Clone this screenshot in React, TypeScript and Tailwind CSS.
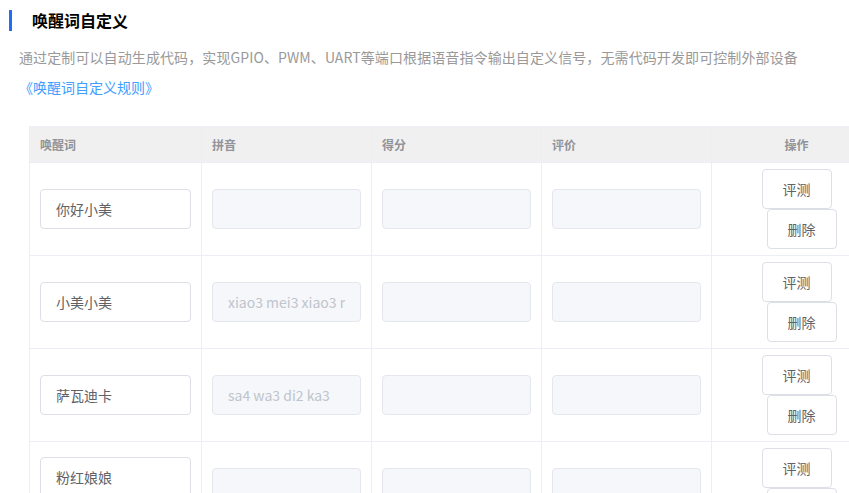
import React from "react";

const FONT = { fontFamily: '"Microsoft YaHei", "Noto Sans CJK SC", "Noto Sans", sans-serif' };

type Row = { word: string; pinyin: string; extra?: boolean };

const rows: Row[] = [
  { word: "你好小美", pinyin: "" },
  { word: "小美小美", pinyin: "xiao3 mei3 xiao3 mei3" },
  { word: "萨瓦迪卡", pinyin: "sa4 wa3 di2 ka3" },
  { word: "粉红娘娘", pinyin: "", extra: true },
];

const cellBase = "border-r border-b border-[#ebeef5] px-[10px] flex items-center shrink-0";

function TextInput({ value }: { value: string }) {
  return (
    <input
      readOnly
      value={value}
      className="w-full h-[40px] rounded-[4px] border border-[#dcdfe6] bg-white px-[15px] text-[14px] text-[#606266] outline-none"
      style={FONT}
    />
  );
}

function DisabledInput({ value }: { value: string }) {
  return (
    <input
      readOnly
      disabled
      value={value}
      className="w-full h-[40px] rounded-[4px] border border-[#e4e7ed] bg-[#f5f7fa] px-[15px] text-[14px] text-[#c0c4cc] outline-none"
      style={FONT}
    />
  );
}

function Btn({ label, extra }: { label: string; extra?: string }) {
  return (
    <button
      className={
        "w-[70px] h-[40px] rounded-[4px] border border-[#dcdfe6] bg-white text-[14px] text-[#606266] leading-none " +
        (extra ?? "")
      }
      style={FONT}
    >
      {label}
    </button>
  );
}

export default function App() {
  return (
    <div className="w-screen h-screen overflow-hidden bg-white" style={FONT}>
      <div className="pt-[10px] pl-[9px]">
        <div className="border-l-[3px] border-[#1f6ff5] pl-[20px] h-[21px] flex items-center">
          <span className="text-[16px] font-bold text-black leading-[21px]">唤醒词自定义</span>
        </div>
      </div>
      <div className="pl-[19px] mt-[16px] text-[14px] leading-[20px] tracking-[0.1px] text-[#999999] whitespace-nowrap">
        通过定制可以自动生成代码，实现GPIO、PWM、UART等端口根据语音指令输出自定义信号，无需代码开发即可控制外部设备
      </div>
      <div className="pl-[19px] mt-[10px] text-[14px] leading-[20px] text-[#409eff]">《唤醒词自定义规则》</div>

      <div className="ml-[29px] mt-[29px] w-[853px] border-l border-t border-[#ebeef5]">
        <div className="flex bg-[#f0f0f0] text-[12px] font-bold text-[#909399]">
          <div className={cellBase + " w-[172px] h-[36px]"}>唤醒词</div>
          <div className={cellBase + " w-[170px] h-[36px]"}>拼音</div>
          <div className={cellBase + " w-[170px] h-[36px]"}>得分</div>
          <div className={cellBase + " w-[170px] h-[36px]"}>评价</div>
          <div className={cellBase + " w-[170px] h-[36px] justify-center"}>操作</div>
        </div>
        {rows.map((r) => (
          <div key={r.word} className="flex">
            <div className={cellBase + " w-[172px] h-[93px]"}>
              <div className="w-full flex flex-col">
                <TextInput value={r.word} />
                {r.extra && <div className="h-[22px]" />}
              </div>
            </div>
            <div className={cellBase + " w-[170px] h-[93px]"}>
              <DisabledInput value={r.pinyin} />
            </div>
            <div className={cellBase + " w-[170px] h-[93px]"}>
              <DisabledInput value="" />
            </div>
            <div className={cellBase + " w-[170px] h-[93px]"}>
              <DisabledInput value="" />
            </div>
            <div className={cellBase + " w-[170px] h-[93px] justify-center"}>
              <div className="w-full flex flex-wrap justify-center">
                <Btn label="评测" />
                <Btn label="删除" extra="ml-[10px]" />
              </div>
            </div>
          </div>
        ))}
      </div>
    </div>
  );
}
